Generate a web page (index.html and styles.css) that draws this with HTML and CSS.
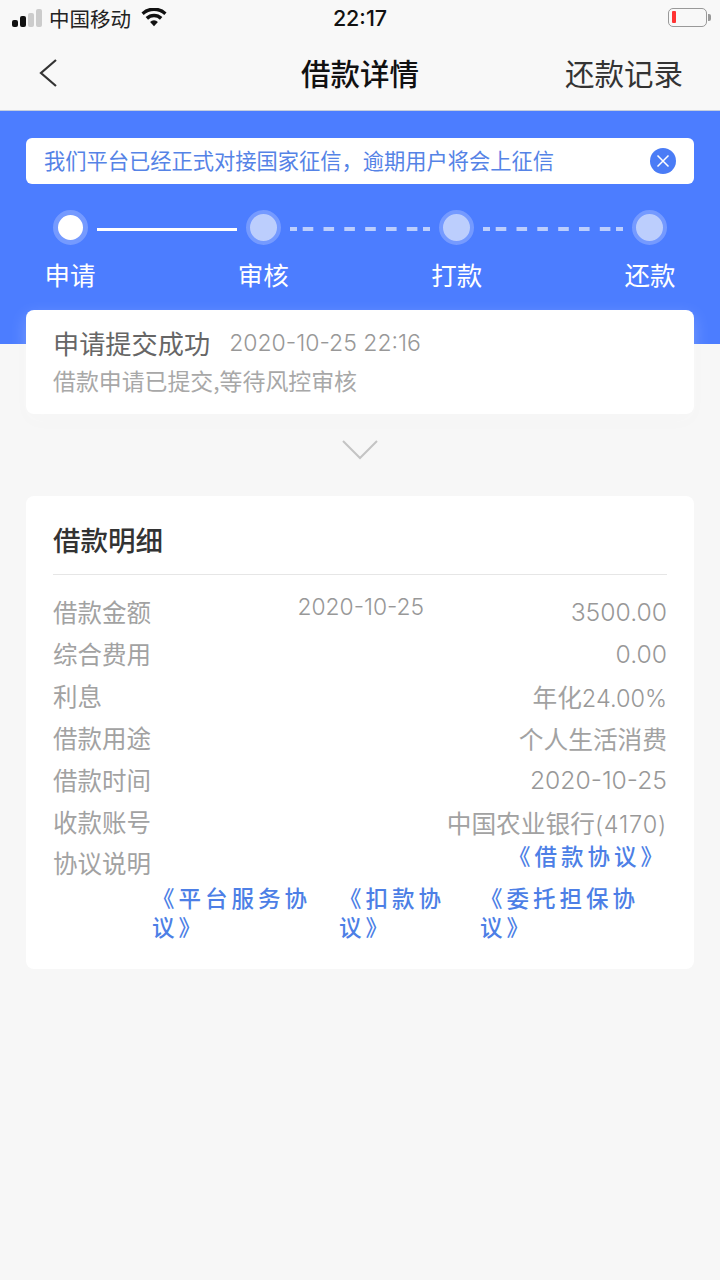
FILE: index.html
```html
<!DOCTYPE html>
<html lang="zh">
<head>
<meta charset="utf-8">
<title>借款详情</title>
<link rel="stylesheet" href="styles.css">
</head>
<body>
<div class="page">
  <header class="top">
    <div class="status">
      <div class="status-left">
        <span class="signal"><i class="on s1"></i><i class="on s2"></i><i class="s3"></i><i class="s4"></i></span>
        <span class="carrier">中国移动</span>
        <svg class="wifi" width="26" height="19" viewBox="0 0 28 20"><path d="M14 19.5 9.800 14.800a6 6 0 0 1 8.400 0Z" fill="#111"/><path d="M7.600 12.400 5 9.500a13 13 0 0 1 18 0l-2.600 2.900a9.200 9.200 0 0 0-12.800 0Z" fill="#111"/><path d="M2.900 7.200.5 4.500a20 20 0 0 1 27 0l-2.400 2.700a16.500 16.500 0 0 0-22.200 0Z" fill="#111"/></svg>
      </div>
      <span class="time">22:17</span>
      <div class="battery"><span class="batt-body"><i class="batt-level"></i></span><span class="batt-tip"></span></div>
    </div>
    <nav class="nav">
      <svg class="back" width="20" height="30" viewBox="0 0 20 30"><path d="M18 2 3 15l15 13" fill="none" stroke="#333" stroke-width="2.200"/></svg>
      <h1 class="nav-title">借款详情</h1>
      <span class="nav-action">还款记录</span>
    </nav>
  </header>

  <section class="hero">
    <div class="notice">
      <span class="notice-text">我们平台已经正式对接国家征信，逾期用户将会上征信</span>
      <svg class="notice-close" width="26" height="26" viewBox="0 0 26 26"><circle cx="13" cy="13" r="13" fill="#4a7cf6"/><path d="M7.500 7.500l11 11m0-11-11 11" stroke="#fff" stroke-width="1.500" fill="none"/></svg>
    </div>
    <div class="track">
      <span class="dot active"></span><span class="line solid"></span>
      <span class="dot"></span>
      <svg class="line-dash" width="140" height="4" viewBox="0 0 140 4"><path d="M0 2H7M12.700 2H23.300M33.500 2H44.100M54.300 2H64.900M75.200 2H85.800M96 2H106.600M116.800 2H127.400M133 2H140" stroke="#bccefd" stroke-width="4" fill="none"/></svg>
      <span class="dot"></span>
      <svg class="line-dash" width="140" height="4" viewBox="0 0 140 4"><path d="M0 2H7M12.700 2H23.300M33.500 2H44.100M54.300 2H64.900M75.200 2H85.800M96 2H106.600M116.800 2H127.400M133 2H140" stroke="#bccefd" stroke-width="4" fill="none"/></svg>
      <span class="dot"></span>
    </div>
    <div class="labels"><span>申请</span><span>审核</span><span>打款</span><span>还款</span></div>
  </section>

  <section class="card progress">
    <div class="progress-head"><span class="progress-title">申请提交成功</span><span class="progress-date">2020-10-25 22:16</span></div>
    <div class="progress-sub">借款申请已提交,等待风控审核</div>
  </section>

  <svg class="chevron" width="38" height="22" viewBox="0 0 38 22"><path d="M2 2l17 17L36 2" fill="none" stroke="#c4c4c4" stroke-width="2"/></svg>

  <section class="card detail">
    <h2 class="detail-title">借款明细</h2>
    <div class="row"><span>借款金额</span><span class="num row-mid">2020-10-25</span><span class="num">3500.00</span></div>
    <div class="row"><span>综合费用</span><span class="num">0.00</span></div>
    <div class="row"><span>利息</span><span>年化<span class="num">24.00%</span></span></div>
    <div class="row"><span>借款用途</span><span>个人生活消费</span></div>
    <div class="row"><span>借款时间</span><span class="num">2020-10-25</span></div>
    <div class="row"><span>收款账号</span><span>中国农业银行<span class="num num-wide">(4170)</span></span></div>
    <div class="row row-agree"><span>协议说明</span><span class="link link-main">《借款协议》</span></div>
    <div class="links">
      <span class="link l1">《平台服务协议》</span>
      <span class="link l2">《扣款协议》</span>
      <span class="link l3">《委托担保协议》</span>
    </div>
  </section>
</div>
</body>
</html>
```
FILE: styles.css
```css
* { box-sizing: border-box; }
html, body { margin: 0; padding: 0; }
body {
  background: #f7f7f7;
  font-family: "Noto Sans CJK SC", sans-serif;
  color: #999;
}
.page { width: 720px; height: 1280px; overflow: hidden; }

.top { height: 111px; background: #f8f8f8; border-bottom: 1px solid #c5cede; }
.status { height: 36px; display: flex; align-items: center; position: relative; padding: 0 9px 0 12px; }
.status-left { display: flex; align-items: center; }
.signal { display: flex; align-items: flex-end; gap: 2.500px; width: 30px; height: 19px; margin-top: -2px; }
.signal i { display: block; flex: none; width: 5.500px; border-radius: 2px; background: #ccc; }
.signal .on { background: #111; }
.s1 { height: 7px; }
.s2 { height: 11px; }
.s3 { height: 14px; }
.s4 { height: 18px; }
.carrier { margin-left: 7px; font-size: 20.500px; line-height: 36px; color: #222; margin-top: -1px; }
.wifi { margin-left: 10px; margin-top: -2px; }
.time {
  position: absolute; left: 0; right: 0; top: 0; text-align: center;
  font-family: Inter, sans-serif; font-size: 21.500px; font-weight: 500; line-height: 36px; color: #111;
}
.battery { margin-left: auto; display: flex; align-items: center; margin-top: -1px; }
.batt-body { width: 39px; height: 19px; border: 1.500px solid #999; border-radius: 5px; padding: 2px 3px; display: block; }
.batt-level { display: block; width: 4px; height: 12px; background: #f33; border-radius: 1px; }
.batt-tip { width: 3px; height: 7px; background: #999; margin-left: 1px; border-radius: 0 2px 2px 0; }

.nav { height: 74px; display: flex; align-items: center; justify-content: space-between; padding: 0 37px 0 38px; position: relative; }
.back { display: block; }
.nav-title {
  position: absolute; left: 0; right: 0; top: 15px; margin: 0; text-align: center;
  font-size: 29.500px; font-weight: 500; line-height: 42px; color: #111;
}
.nav-action { font-size: 29.500px; line-height: 42px; color: #333; margin-top: -2px; }

.hero { height: 233px; background: #4c7dff; padding-top: 27px; }
.notice {
  margin: 0 26px; height: 46px; background: #fff; border-radius: 6px;
  display: flex; align-items: center; justify-content: space-between; padding: 0 18px 0 18px;
}
.notice-text { font-size: 21.250px; line-height: 44px; color: #5583e6; margin-top: -2px; }
.track { display: flex; align-items: center; gap: 9px; margin-top: 26px; padding: 0 53px; }
.dot { width: 35px; height: 35px; border-radius: 50%; background: #bccefd; border: 4px solid #759aff; flex: none; }
.dot.active { background: #fff; border-width: 5.500px; }
.line { flex: 1; height: 3px; margin-top: 3px; }
.line.solid { background: #fff; }
.line-dash { flex: none; display: block; margin-top: 3px; }
.labels { display: flex; justify-content: space-between; padding: 0 44.500px; margin-top: 11px; font-size: 25.500px; line-height: 36px; color: #fff; }

.card { margin: 0 26px; background: #fff; border-radius: 8px; }
.progress {
  height: 104px; margin-top: -34px; padding: 15px 27px 0 27px; position: relative;
  box-shadow: 0 6px 16px rgba(255,255,255,.25), 0 8px 20px rgba(0,0,0,.015);
}
.progress-head { display: flex; align-items: center; height: 36px; }
.progress-title { font-size: 26.200px; line-height: 36px; color: #666; }
.progress-date { margin-left: 19px; font-family: Inter, sans-serif; font-size: 23px; font-weight: 300; color: #989898; }
.progress-sub { margin-top: 2px; font-size: 22.900px; line-height: 34px; color: #a8a8a8; }

.chevron { display: block; margin: 25px auto 0 341px; }

.detail { height: 473px; margin-top: 35px; padding: 0 27px; }
.detail-title {
  margin: 0 0 16px; height: 79px; border-bottom: 1px solid #e6e6e6;
  font-size: 27.500px; font-weight: 500; line-height: 87px; color: #333;
}
.row {
  display: flex; justify-content: space-between; align-items: flex-start;
  height: 42px; font-size: 24.500px; line-height: 42px; color: #a2a2a2;
}
.row > span:last-child { font-size: 24.700px; }
.row .num { font-family: Inter, sans-serif; font-size: 23.500px; font-weight: 300; color: #989898; }
.row .num-wide { letter-spacing: .8px; }
.row .row-mid { font-size: 22.800px; line-height: 32px; }
.row-agree { height: 41px; margin-top: -1px; }
.link { color: #4d7fe6; font-family: "Noto Sans CJK SC", sans-serif; font-size: 22.500px; font-weight: 500; letter-spacing: 4px; line-height: 29px; }
.row > span.link-main { font-size: 22.500px; line-height: 30px; margin-top: -2px; }
.links { display: flex; align-items: flex-start; padding-left: 99px; }
.links .link { display: block; }
.l1 { width: 187px; }
.l2 { width: 141px; }
.l3 { width: 165px; }
```
